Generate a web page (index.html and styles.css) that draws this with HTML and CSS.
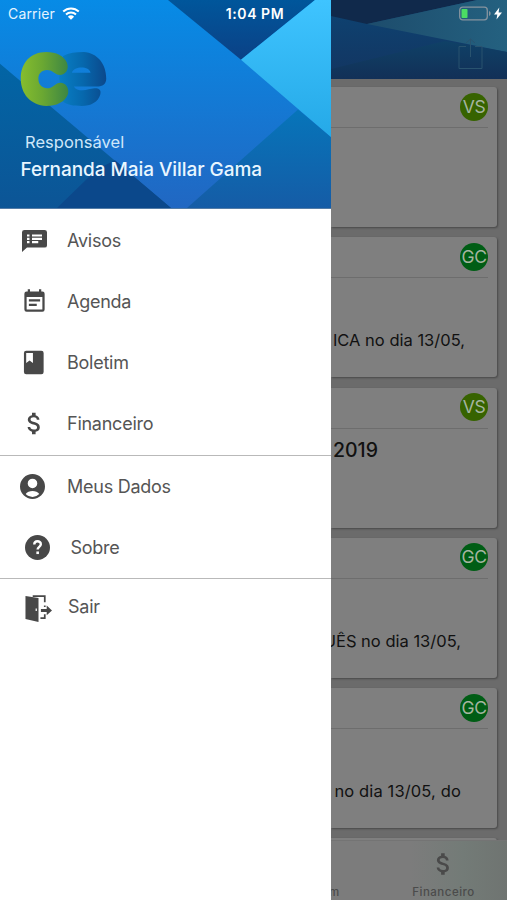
FILE: index.html
```html
<!DOCTYPE html>
<html lang="pt-BR">
<head>
<meta charset="utf-8">
<meta name="viewport" content="width=device-width, initial-scale=1">
<title>Menu</title>
<link rel="stylesheet" href="styles.css">
</head>
<body>
<div class="screen">
  <aside class="drawer">
    <header class="profile">
      <svg class="profile-art" viewBox="0 0 331 209" preserveAspectRatio="none" aria-hidden="true">
        <defs>
          <linearGradient id="sky" x1="0" y1="0" x2="0" y2="1"><stop offset="0" stop-color="#078be6"/><stop offset="1" stop-color="#2167c2"/></linearGradient>
          <linearGradient id="navy" x1="0" y1="0" x2="0" y2="1"><stop offset="0" stop-color="#00569b"/><stop offset="1" stop-color="#0b4186"/></linearGradient>
          <linearGradient id="cyan" x1="0" y1="0" x2="0" y2="1"><stop offset="0" stop-color="#3fc4ff"/><stop offset="1" stop-color="#25a9e7"/></linearGradient>
          <linearGradient id="teal" x1="0" y1="0" x2="0" y2="1"><stop offset="0" stop-color="#0265a5"/><stop offset="1" stop-color="#0c5596"/></linearGradient>
          <linearGradient id="sea" x1="0" y1="0" x2="0" y2="1"><stop offset="0" stop-color="#0675ba"/><stop offset="1" stop-color="#155ca6"/></linearGradient>
        </defs>
        <path fill="url(#sky)" d="M0 0h331v209H0z"/>
        <path fill="url(#navy)" d="M168 0h147l-74 60z"/>
        <path fill="url(#cyan)" d="M315 0h16v138L241 60z"/>
        <path fill="url(#sea)" d="M298 110l33 28v71H187z"/>
        <path fill="url(#teal)" d="M0 64L171 209H0z"/>
        <path fill="#0b488b" d="M97 170l18-9 21 18 35 30H57z"/>
      </svg>
      <svg class="logo" viewBox="0 0 88 56" role="img" aria-label="ce">
        <defs>
          <linearGradient id="lime" x1="0" y1="0" x2="1" y2="0"><stop offset="0" stop-color="#86bd2e"/><stop offset=".45" stop-color="#6ba832"/><stop offset="1" stop-color="#3d8643"/></linearGradient>
          <linearGradient id="deep" x1="0" y1="0" x2="1" y2="0"><stop offset="0" stop-color="#087fc5"/><stop offset=".5" stop-color="#0668ad"/><stop offset="1" stop-color="#0b488b"/></linearGradient>
        </defs>
        <path fill="url(#deep)" fill-rule="evenodd" d="M43 4C49 1 56 0 64 0c14 1 23 12 23 27 0 5-3 8-8 8H54c2 4 9 5 15 3l6-1c5 0 7 2 6 6-2 8-10 12-19 12-8 0-15-1-20-5l-3-24zM52 21h19c-1-7-17-7-19 0z"/>
        <path fill="url(#lime)" d="M26 0c10 0 18 4 21 11 3 8-3 14-10 12l-3-2c-8-6-17-1-16 7 0 8 9 12 16 6l3-2c7-3 13 4 11 11-3 8-12 12-22 12C10 54 0 43 0 27 0 11 10 0 26 0z"/>
      </svg>
      <p class="role">Responsável</p>
      <h1 class="name">Fernanda Maia Villar Gama</h1>
    </header>
    <nav class="menu">
      <ul class="group group-main">
        <li class="item item-notices"><svg class="icon" viewBox="2 2 20 20" preserveAspectRatio="none"><path d="M20 2H4a2 2 0 0 0-2 2v18l4-4h14a2 2 0 0 0 2-2V4a2 2 0 0 0-2-2zM8 14H6v-2h2zm0-3H6V9h2zm0-3H6V6h2zm7 6h-5v-2h5zm3-3h-8V9h8zm0-3h-8V6h8z"/></svg><span>Avisos</span></li>
        <li class="item item-agenda"><svg class="icon" viewBox="0 0 24 24"><path d="M17 10H7v2h10zm2-7h-1V1h-2v2H8V1H6v2H5a2 2 0 0 0-2 2v14a2 2 0 0 0 2 2h14a2 2 0 0 0 2-2V5a2 2 0 0 0-2-2zm0 16H5V8h14zm-5-5H7v2h7z"/></svg><span>Agenda</span></li>
        <li class="item"><svg class="icon" viewBox="0 0 24 24"><path fill-rule="evenodd" d="M19 1.500H5.500a2 2 0 0 0-2 2v17a2 2 0 0 0 2 2H19a2 2 0 0 0 2-2v-17a2 2 0 0 0-2-2zM5.500 3.500h6v9l-3-2.200-3 2.200z"/></svg><span>Boletim</span></li>
        <li class="item"><svg class="icon" viewBox="0 .8 22.500 22.500"><path d="M11.800 10.900c-2.270-.59-3-1.200-3-2.150 0-1.090 1.010-1.850 2.700-1.850 1.780 0 2.440.85 2.500 2.100h2.210c-.07-1.720-1.120-3.300-3.210-3.810V3h-3v2.160c-1.940.42-3.500 1.680-3.500 3.610 0 2.310 1.910 3.460 4.700 4.130 2.500.6 3 1.480 3 2.410 0 .69-.49 1.790-2.700 1.790-2.060 0-2.870-.92-2.980-2.100h-2.200c.12 2.190 1.760 3.420 3.680 3.830V21h3v-2.150c1.950-.37 3.500-1.500 3.500-3.550 0-2.840-2.430-3.810-4.700-4.400z"/></svg><span>Financeiro</span></li>
      </ul>
      <ul class="group group-account">
        <li class="item item-data"><svg class="icon" viewBox="0 0 24 24"><path fill-rule="evenodd" d="M12 0a12 12 0 1 0 0 24 12 12 0 0 0 0-24zm0 4.500a4.600 4.600 0 1 1 0 9.200 4.600 4.600 0 0 1 0-9.200zM12 22c-2.600 0-4.900-1-6.500-2.700 1-2 4-3 6.500-3s5.500 1 6.500 3A8.900 8.900 0 0 1 12 22z"/></svg><span>Meus Dados</span></li>
        <li class="item item-about"><svg class="icon" viewBox="0 0 24 24"><circle cx="12" cy="12" r="12"/><path class="question" d="M8.900 9.200c0-4.300 6.300-4 6.300-.4 0 2.600-3.100 2.500-3.100 5.200"/><path class="question-dot" d="M10.900 15.800h2.500v2.500h-2.500z"/></svg><span>Sobre</span></li>
      </ul>
      <ul class="group group-exit">
        <li class="item item-exit"><svg class="icon" viewBox="0 0 28 28"><path fill-rule="evenodd" d="M.5 1l13.500 2v25L.5 25zM11 14v2.500h1.300V14z"/><path class="door-frame" d="M8 1.200h12.500v6.300M20.500 11v1.500M20.500 20v4H16"/><path d="M16.500 14.500h6v-3.500l5.500 5-5.500 5v-3.500h-6z"/></svg><span>Sair</span></li>
      </ul>
    </nav>
  </aside>

  <main class="feed">
    <header class="navbar">
      <svg class="navbar-art" viewBox="0 0 176 79" preserveAspectRatio="none" aria-hidden="true">
        <defs>
          <linearGradient id="bar" x1="0" y1="0" x2="0" y2="1"><stop offset="0" stop-color="#0d4473"/><stop offset="1" stop-color="#133561"/></linearGradient>
          <linearGradient id="low" x1="0" y1="0" x2="0" y2="1"><stop offset="0" stop-color="#0f4167"/><stop offset="1" stop-color="#123057"/></linearGradient>
          <linearGradient id="ray" x1="0" y1="0" x2="1" y2="0"><stop offset="0" stop-color="#1d4c6c"/><stop offset="1" stop-color="#246180"/></linearGradient>
        </defs>
        <path fill="url(#bar)" d="M0 0h176v79H0z"/>
        <path fill="#10294b" d="M0 0h146L36 24 0 16z"/>
        <path fill="url(#ray)" d="M146 0h30v52L36 24z"/>
        <path fill="url(#low)" d="M114 41l62 11v27H0V69z"/>
      </svg>
      <svg class="share" viewBox="0 0 25 32" aria-hidden="true"><path d="M8 8.500H1v22h23v-22h-7M12.500 19V1M8 5l4.500-4L17 5"/></svg>
    </header>
    <div class="cards">
      <article class="card"><div class="card-head"><span class="badge lime">VS</span></div></article>
      <article class="card"><div class="card-head"><span class="badge green">GC</span></div><p class="card-text end-32">ICA no dia 13/05,</p></article>
      <article class="card"><div class="card-head"><span class="badge lime">VS</span></div><h2 class="card-title">2019</h2></article>
      <article class="card"><div class="card-head"><span class="badge green">GC</span></div><p class="card-text end-36">UÊS no dia 13/05,</p></article>
      <article class="card"><div class="card-head"><span class="badge green">GC</span></div><p class="card-text end-36 last">no dia 13/05, do</p></article>
      <article class="card"></article>
    </div>
    <footer class="tabs">
      <div class="tab tab-report"><span>m</span></div>
      <div class="tab tab-money">
        <svg class="tab-icon" viewBox="5 2 14 20"><path d="M11.800 10.900c-2.270-.59-3-1.200-3-2.150 0-1.090 1.010-1.850 2.700-1.850 1.780 0 2.440.85 2.500 2.100h2.210c-.07-1.720-1.120-3.300-3.210-3.810V3h-3v2.160c-1.940.42-3.500 1.680-3.500 3.610 0 2.310 1.910 3.460 4.700 4.130 2.500.6 3 1.480 3 2.410 0 .69-.49 1.790-2.700 1.790-2.060 0-2.870-.92-2.980-2.100h-2.200c.12 2.190 1.760 3.420 3.680 3.830V21h3v-2.150c1.950-.37 3.500-1.500 3.500-3.550 0-2.840-2.430-3.810-4.700-4.400z"/></svg>
        <span>Financeiro</span>
      </div>
    </footer>
  </main>

  <div class="status">
    <div class="carrier"><span>Carrier</span>
      <svg class="wifi" viewBox="0 0 18 13"><path d="M1.200 4.600a11.400 11.400 0 0 1 15.600 0M4 7.500a7.300 7.300 0 0 1 10 0"/><path class="wifi-dot" d="M9 12.800L5.900 9.700a4.500 4.500 0 0 1 6.200 0z"/></svg>
    </div>
    <span class="clock">1:04 PM</span>
    <div class="power">
      <svg class="battery" viewBox="0 0 32 14"><rect class="battery-shell" x=".7" y=".7" width="27.600" height="12.600" rx="3"/><rect class="battery-level" x="2.500" y="2.500" width="6" height="9" rx=".8"/><path class="battery-tip" d="M30 4.500c2.200.8 2.200 4.200 0 5z"/></svg>
      <svg class="bolt" viewBox="0 0 8 12"><path d="M5.300 0L0 7h3.300L2.500 12 8 5H4.600z"/></svg>
    </div>
  </div>
</div>
</body>
</html>
```
FILE: styles.css
```css
* { box-sizing: border-box; margin: 0; padding: 0; }

body {
  font-family: Inter, "Liberation Sans", sans-serif;
  overflow: hidden;
}

.screen {
  position: relative;
  display: grid;
  grid-template-columns: 331px 1fr;
  width: 507px;
  height: 900px;
  overflow: hidden;
}

/* Drawer */
.drawer { background: #fff; min-width: 0; }

.profile {
  position: relative;
  height: 209px;
  padding: 52px 0 0 19.5px;
  color: #e9f6ff;
  border-bottom: 1px solid #537ca7;
}
.profile-art { position: absolute; inset: 0; width: 100%; height: 100%; }
.logo { position: relative; display: block; width: 88px; height: 55px; }
.role {
  position: relative;
  margin: 25px 0 0 5.5px;
  font-size: 16.5px;
  line-height: 20px;
  letter-spacing: 0.05px;
  color: #cfe7fa;
}
.name {
  position: relative;
  margin: 6px 0 0 1px;
  font-size: 19px;
  font-weight: 500;
  line-height: 24px;
  letter-spacing: -0.06px;
  white-space: nowrap;
}

.group { list-style: none; }
.group-main { padding-top: 1px; height: 245.500px; }
.group-account { height: 123px; border-top: 1px solid #b9b9b9; }
.group-exit { border-top: 1px solid #b9b9b9; }
.item {
  display: flex;
  align-items: center;
  height: 61px;
  padding-left: 20px;
  gap: 20px;
  font-size: 18px;
  letter-spacing: -0.25px;
  color: #555;
}
.icon { width: 27px; height: 27px; fill: #484848; flex: none; }
.item-notices .icon { width: 25px; height: 22px; margin-left: 1.500px; }
.item-notices { gap: 20.500px; }
.item-agenda .icon { margin-left: .5px; margin-right: -.5px; }
.item-data .icon { width: 25px; height: 25px; }
.item-data { gap: 22px; }
.item-about { padding-left: 25px; gap: 20.500px; }
.item-about .icon { width: 25px; height: 25px; }
.item-exit { padding-left: 25px; gap: 16px; height: 55px; }
.item-exit .icon { margin-top: 4px; }
.question { fill: none; stroke: #fff; stroke-width: 2.3; }
.question-dot { fill: #fff; }
.door-frame { fill: none; stroke: #484848; stroke-width: 1.8; }

/* Dimmed feed */
.feed {
  display: flex;
  flex-direction: column;
  min-width: 0;
  overflow: hidden;
  background: #6b6b6b;
}
.navbar {
  position: relative;
  display: flex;
  justify-content: flex-end;
  height: 79px;
  flex: none;
  padding: 38px 24px 0 0;
}
.navbar-art { position: absolute; inset: 0; width: 100%; height: 100%; }
.share {
  position: relative;
  width: 25px;
  height: 32px;
  fill: none;
  stroke: #29536f;
  stroke-width: 1;
}
.cards {
  display: flex;
  flex-direction: column;
  gap: 10.25px;
  flex: 1;
  min-height: 0;
  overflow: hidden;
  padding: 8px 10px 0 0;
}
.card {
  flex: none;
  height: 140px;
  background: #7f7f7f;
  border-radius: 0 3px 3px 0;
  box-shadow: 1px 1px 2px #484848;
  color: #111;
}
.card-head {
  display: flex;
  justify-content: flex-end;
  height: 41px;
  margin-right: 9px;
  padding-top: 5.500px;
  border-bottom: 1px solid #6d6d6d;
}
.badge {
  width: 28px;
  height: 28px;
  border-radius: 50%;
  font-size: 17.500px;
  line-height: 28px;
  text-align: center;
  letter-spacing: -0.5px;
  color: #a5b5a0;
}
.lime { background: #376300; }
.green { background: #005d15; }
.card-text {
  display: flex;
  justify-content: flex-end;
  margin-top: 52px;
  font-size: 16.5px;
  line-height: 20px;
  white-space: nowrap;
}
.last { letter-spacing: 0.13px; }
.end-32 { margin-right: 32px; }
.end-36 { margin-right: 36px; }
.card-title {
  margin: 9px 0 0 2px;
  font-size: 19.5px;
  font-weight: 500;
  line-height: 24px;
}
.tabs {
  position: relative;
  display: flex;
  height: 60px;
  flex: none;
  background: linear-gradient(90deg, #7c7c7c 45%, #737b77 75%, #6f7471);
  border-top: 1px solid #747474;
  font-size: 11.5px;
  font-weight: 500;
  line-height: 14px;
  letter-spacing: 0.5px;
  color: #4b4b4b;
}
.tab { display: flex; flex-direction: column; align-items: center; padding-top: 10.500px; }
.tab-report { width: 49px; align-items: flex-start; padding-top: 43.500px; }
.tab-report span { margin-left: -2px; }
.tab-money { width: 127px; }
.tab-icon { width: 17px; height: 24px; margin-bottom: 9px; fill: #4a4a4a; }

/* Status bar over both panes */
.status {
  position: absolute;
  inset: 0 0 auto 0;
  display: grid;
  grid-template-columns: 1fr auto 1fr;
  align-items: center;
  height: 27px;
  padding: 0 5px 0 8px;
  color: #fff;
  font-size: 14px;
}
.carrier { display: flex; align-items: center; gap: 7px; color: #e4f3ff; letter-spacing: 0.15px; }
.wifi { width: 18px; height: 13px; fill: none; stroke: #fff; stroke-width: 2; }
.wifi-dot { fill: #fff; stroke: none; }
.clock { font-weight: 600; letter-spacing: 0.55px; }
.power { display: flex; justify-content: flex-end; align-items: center; gap: 3px; }
.battery { width: 32px; height: 15px; }
.battery-shell { fill: none; stroke: #87949f; stroke-width: 1.3; }
.battery-level { fill: #4bdc63; }
.battery-tip { fill: #87949f; }
.bolt { width: 8px; height: 13px; fill: #fff; }
```
